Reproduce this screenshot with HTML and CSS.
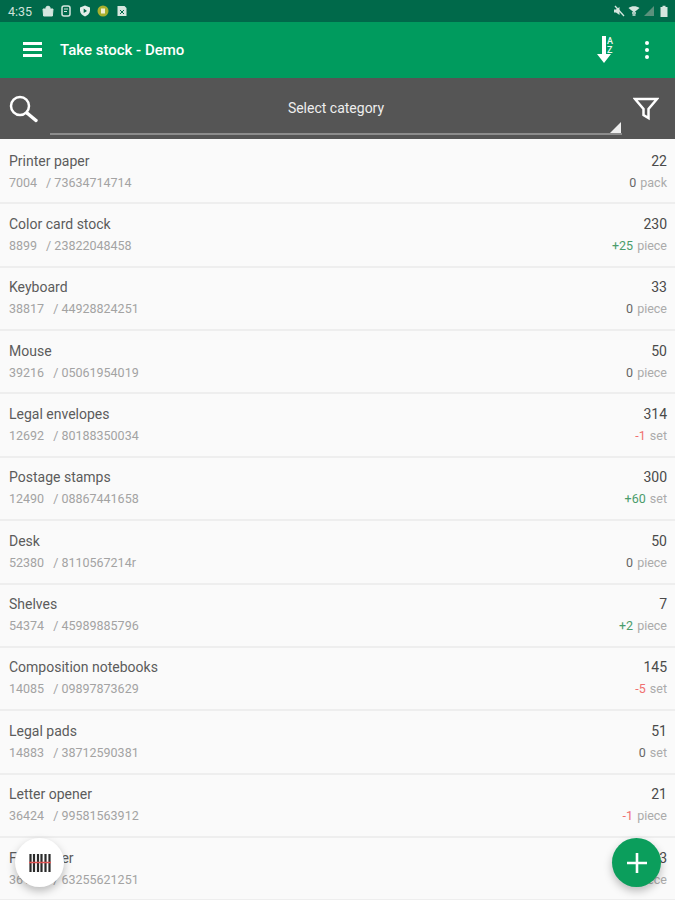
FILE: index.html
```html
<!DOCTYPE html>
<html lang="en">
<head>
    <meta charset="UTF-8">
    <meta name="viewport" content="width=device-width, initial-scale=1.0">
    <title>Take stock - Demo</title>
    <link rel="stylesheet" href="styles.css">
</head>
<body>
    <div class="app">
        <!-- Status bar -->
        <div class="status-bar">
            <span class="clock">4:35</span>
            <svg class="status-icon" viewBox="0 0 12 12"><path d="M1 4h10l-.6 7H1.600zM4 4V2.500C4 .8 8 .8 8 2.500V4" fill="#d5e6df" stroke="#d5e6df"/></svg>
            <svg class="status-icon" viewBox="0 0 12 12"><rect x="2" y="1" width="8" height="10" rx="2" fill="none" stroke="#d5e6df" stroke-width="1.500"/><path d="M4 4h4M4 6.500h3" stroke="#d5e6df"/></svg>
            <svg class="status-icon" viewBox="0 0 12 12"><path d="M6 .5l5 2v3c0 3-2.500 5-5 6-2.500-1-5-3-5-6v-3z" fill="#e4eeea"/><path d="M4.700 3.500L8 6 4.700 8z" fill="#00694a"/></svg>
            <svg class="status-icon" viewBox="0 0 12 12"><circle cx="6" cy="6" r="5.500" fill="#a9b02e"/><rect x="4" y="3.500" width="4" height="5" fill="#f1efd0"/></svg>
            <svg class="status-icon" viewBox="0 0 12 12"><path d="M1.500 1h7l2 2v8h-9z" fill="#d5e6df"/><path d="M4 5l4 4M8 5L4 9" stroke="#00694a"/></svg>
            <div class="status-right">
                <svg class="status-icon" viewBox="0 0 12 12"><path d="M1 4.500h2L6.500 2v8L3 7.500H1z" fill="#d5e6df"/><path d="M2 1l9 10" stroke="#d5e6df" stroke-width="1.300"/></svg>
                <svg class="status-icon" viewBox="0 0 12 12"><path d="M.5 3C3.500.5 8.500.5 11.500 3L6 7.500z" fill="#d5e6df"/><path d="M4 8h4M4.500 10h3" stroke="#d5e6df" stroke-width="1.500"/></svg>
                <svg class="status-icon" viewBox="0 0 12 12"><path d="M11 1v10H1z" fill="#5b917c"/></svg>
                <svg class="status-icon" viewBox="0 0 12 12"><path d="M2.500 2H4.500V.8h3V2h2v10h-7z" fill="#d5e6df"/></svg>
            </div>
        </div>

        <!-- Toolbar -->
        <header class="toolbar">
            <div class="menu-btn"><span></span><span></span><span></span></div>
            <h1 class="title">Take stock - Demo</h1>
            <div class="sort-btn">
                <svg viewBox="0 0 20 30" width="20" height="30"><path d="M6 1h4v18h5l-7 9-7-9h5z" fill="#fff"/></svg>
                <span class="sort-label">A<br>Z</span>
            </div>
            <div class="more-btn"><span></span><span></span><span></span></div>
        </header>

        <!-- Category filter -->
        <div class="filter-bar">
            <svg class="search-icon" viewBox="0 0 30 30" width="30" height="30"><circle cx="11" cy="12" r="9" fill="none" stroke="#fff" stroke-width="2.500"/><path d="M18 19l9 7.500" stroke="#fff" stroke-width="3.500" stroke-linecap="round"/></svg>
            <div class="category-select">
                <span>Select category</span>
                <i class="select-arrow"></i>
            </div>
            <svg class="funnel-icon" viewBox="0 0 26 24" width="26" height="24"><path d="M2 2h22l-8.500 10v9l-5-3v-6z" fill="none" stroke="#fff" stroke-width="2.500"/></svg>
        </div>

        <!-- Stock list -->
        <div class="list" id="list"></div>

        <button class="fab fab-scan">
            <svg viewBox="0 0 22 18" width="22" height="18">
                <path d="M1.500 0v18M5 0v18M9 0v18M12.500 0v18M16.500 0v18M20.500 0v18" stroke="#2a2a2a" stroke-width="2.200"/>
                <path d="M0 8.500h22" stroke="#e25555" stroke-width="1.500"/>
            </svg>
        </button>
        <button class="fab fab-add">
            <svg viewBox="0 0 24 24" width="24" height="24"><path d="M12 2v20M2 12h20" stroke="#fff" stroke-width="2.600"/></svg>
        </button>
    </div>

    <script>
        const items = [
            ['Printer paper', '7004', '73634714714', '22', '0', 'pack'],
            ['Color card stock', '8899', '23822048458', '230', '+25', 'piece'],
            ['Keyboard', '38817', '44928824251', '33', '0', 'piece'],
            ['Mouse', '39216', '05061954019', '50', '0', 'piece'],
            ['Legal envelopes', '12692', '80188350034', '314', '-1', 'set'],
            ['Postage stamps', '12490', '08867441658', '300', '+60', 'set'],
            ['Desk', '52380', '8110567214r', '50', '0', 'piece'],
            ['Shelves', '54374', '45989885796', '7', '+2', 'piece'],
            ['Composition notebooks', '14085', '09897873629', '145', '-5', 'set'],
            ['Legal pads', '14883', '38712590381', '51', '0', 'set'],
            ['Letter opener', '36424', '99581563912', '21', '-1', 'piece'],
            ['File holder', '36110', '63255621251', '3', '0', 'piece']
        ];

        const list = document.getElementById('list');

        items.forEach(function(item) {
            let diffClass = 'diff';
            if (item[4][0] === '+') diffClass += ' plus';
            if (item[4][0] === '-') diffClass += ' minus';

            const row = document.createElement('div');
            row.className = 'row';
            row.innerHTML = `
                <div class="row-line">
                    <span class="name">${item[0]}</span>
                    <span class="qty">${item[3]}</span>
                </div>
                <div class="row-line">
                    <span class="codes">${item[1]}<span class="slash">/ ${item[2]}</span></span>
                    <span class="unit"><span class="${diffClass}">${item[4]}</span> ${item[5]}</span>
                </div>`;
            list.appendChild(row);
        });
    </script>
</body>
</html>
```

FILE: styles.css
```css
* {
    margin: 0;
    padding: 0;
    box-sizing: border-box;
}

body {
    font-family: Roboto, Arial, sans-serif;
    background-color: #fafafa;
    overflow: hidden;
}

.app {
    position: relative;
    width: 675px;
    height: 900px;
    overflow: hidden;
    display: flex;
    flex-direction: column;
}

.status-bar {
    height: 22px;
    flex-shrink: 0;
    background-color: #00694a;
    display: flex;
    align-items: center;
    gap: 6.500px;
    padding: 0 5px 0 8px;
}

.clock {
    color: #cfe2da;
    font-size: 12.500px;
    margin-right: 3px;
}

.status-icon {
    width: 12px;
    height: 12px;
}

.status-right {
    margin-left: auto;
    display: flex;
    gap: 3px;
}

.toolbar {
    height: 56px;
    flex-shrink: 0;
    background-color: #009b5e;
    display: flex;
    align-items: center;
    padding: 0 26px 0 23px;
}

.menu-btn {
    width: 19px;
    margin-top: -2px;
    display: flex;
    flex-direction: column;
    gap: 3px;
}

.menu-btn span {
    height: 3px;
    background-color: #fff;
}

.title {
    color: #fff;
    font-size: 15px;
    font-weight: 500;
    margin-left: 18px;
    flex: 1;
}

.sort-btn {
    display: flex;
    align-items: flex-start;
    margin-right: 32px;
}

.sort-label {
    color: #f0f7f3;
    font-size: 9px;
    font-weight: 500;
    line-height: 9px;
    margin: 2px 0 0 -9px;
}

.more-btn {
    display: flex;
    flex-direction: column;
    gap: 3px;
}

.more-btn span {
    width: 4px;
    height: 4px;
    border-radius: 50%;
    background-color: #fff;
}

.filter-bar {
    height: 61px;
    flex-shrink: 0;
    background-color: #555;
    display: flex;
    align-items: center;
    padding: 0 16px 0 9px;
}

.search-icon {
    flex-shrink: 0;
}

.category-select {
    position: relative;
    flex: 1;
    height: 53px;
    margin: 0 11px 0 11px;
    border-bottom: 2px solid #8c8c8c;
    color: #eee;
    font-size: 14px;
    text-align: center;
    padding-top: 18px;
}

.select-arrow {
    position: absolute;
    right: 1px;
    bottom: 0;
    border-left: 11px solid transparent;
    border-bottom: 11px solid #eee;
}

.funnel-icon {
    flex-shrink: 0;
}

.list {
    flex: 1;
    overflow: hidden;
    padding-top: 2px;
}

.row {
    height: 63.360px;
    padding: 11.600px 8px 0 9px;
    border-bottom: 2px solid #eeeeee;
    display: flex;
    flex-direction: column;
    gap: 5px;
}

.row-line {
    display: flex;
    justify-content: space-between;
    align-items: baseline;
    height: 17px;
}

.name {
    font-size: 14px;
    color: #5c5c5c;
}

.qty {
    font-size: 14px;
    color: #4a4a4a;
}

.codes {
    font-size: 12.500px;
    color: #a3a3a3;
}

.slash {
    margin-left: 9px;
}

.unit {
    font-size: 12.500px;
    color: #ababab;
}

.diff {
    color: #666;
    margin-right: 1px;
}

.diff.plus {
    color: #4a9c6b;
}

.diff.minus {
    color: #f07070;
}

.fab {
    position: absolute;
    width: 49px;
    height: 49px;
    border: none;
    border-radius: 50%;
    display: flex;
    align-items: center;
    justify-content: center;
    box-shadow: 0 4px 8px rgba(0, 0, 0, 0.25);
}

.fab-scan {
    left: 15px;
    top: 838px;
    background-color: #fff;
}

.fab-add {
    left: 612px;
    top: 838px;
    background-color: #0b9e5c;
}
```
